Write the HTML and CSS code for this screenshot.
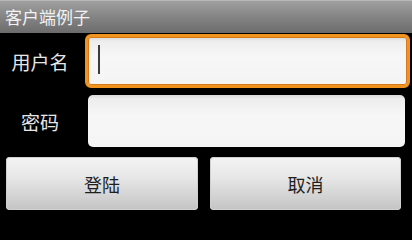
FILE: index.html
```html
<!DOCTYPE html>
<html lang="zh">
<head>
<meta charset="utf-8">
<title>客户端例子</title>
<link rel="stylesheet" href="styles.css">
</head>
<body>
<div class="app">
  <div class="titlebar">客户端例子</div>
  <div class="row row-user">
    <div class="label">用户名</div>
    <div class="field focused"><div class="input"><span class="cursor"></span></div></div>
  </div>
  <div class="row row-pass">
    <div class="label">密码</div>
    <div class="field"><div class="input"></div></div>
  </div>
  <div class="buttons">
    <div class="btn btn-left">登陆</div>
    <div class="btn btn-right">取消</div>
  </div>
</div>
</body>
</html>
```
FILE: styles.css
```css
html, body {
  margin: 0;
  padding: 0;
  background: #000;
}
.app {
  width: 412px;
  height: 214px;
  background: #000;
  font-family: "Noto Sans CJK SC", "Noto Sans", sans-serif;
  display: flex;
  flex-direction: column;
}
.titlebar {
  height: 33px;
  line-height: 33px;
  padding-left: 5px;
  font-size: 17px;
  color: #f2f2f2;
  background: linear-gradient(#a2a2a2 0%, #8a8a8a 40%, #6c6c6c 100%);
  box-shadow: inset 0 1px 0 #b8b8b8;
}
.row {
  display: flex;
  align-items: stretch;
}
.row-user {
  margin-top: 1px;
  height: 54px;
}
.row-pass {
  margin-top: 7px;
  height: 52px;
}
.label {
  width: 80px;
  margin-right: 5px;
  display: flex;
  align-items: center;
  justify-content: center;
  font-size: 19px;
  color: #e6e6e6;
}
.field {
  flex: 0 0 325px;
  display: flex;
}
.row-pass .field {
  padding: 0 5px 0 3px;
  box-sizing: border-box;
}
.input {
  flex: 1;
  position: relative;
  border-radius: 5px;
  background: linear-gradient(#d9d9d9 0px, #ededed 4px, #f7f7f7 40%, #f4f4f4 100%);
}
.focused .input {
  border: 3px solid #f0931f;
  border-radius: 6px;
  box-shadow: inset 0 0 0 1px #d8781a;
}
.cursor {
  position: absolute;
  left: 10px;
  top: 8px;
  width: 2px;
  height: 29px;
  background: #3c3c3c;
}
.buttons {
  display: flex;
  margin-top: 10px;
  padding-left: 6px;
  gap: 12px;
}
.btn {
  height: 53px;
  display: flex;
  align-items: center;
  justify-content: center;
  font-size: 18px;
  color: #1e1e1e;
  border-radius: 4px;
  background: linear-gradient(#f4f4f4 0%, #e6e6e6 40%, #c4c4c4 100%);
  box-shadow: inset 0 0 0 1px #d0d0d0;
}
.btn-left {
  width: 192px;
}
.btn-right {
  width: 191px;
}
```
